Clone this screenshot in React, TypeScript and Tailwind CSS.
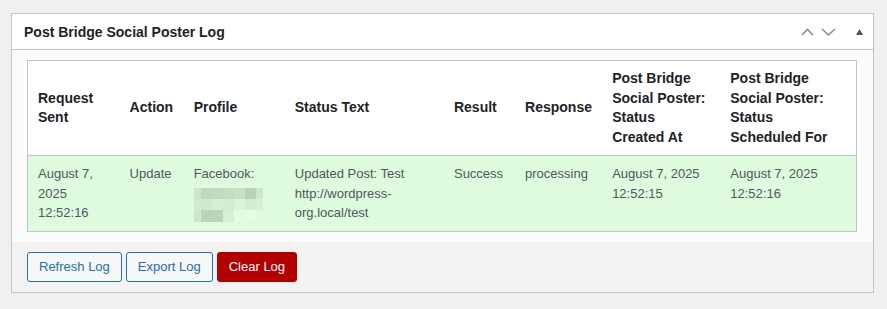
import React from 'react';

const columns = [
  { label: 'Request Sent', width: 'w-[92px]' },
  { label: 'Action', width: 'w-[64px]' },
  { label: 'Profile', width: 'w-[101px]' },
  { label: 'Status Text', width: 'w-[159px]' },
  { label: 'Result', width: 'w-[71px]' },
  { label: 'Response', width: 'w-[87px]' },
  { label: 'Post Bridge Social Poster: Status Created At', width: 'w-[118px]' },
  { label: 'Post Bridge Social Poster: Status Scheduled For', width: 'w-[136px]' },
];

// pixelated (redacted) profile name
const blurCols = ['w-[7px]', 'w-[11px]', 'w-[11px]', 'w-[11px]', 'w-[11px]', 'w-[11px]', 'w-[7px]'];
const blurRows = [
  { h: 'h-[11px]', colors: ['#c9e6c9', '#bcd9bc', '#bfdcbf', '#c3dfc3', '#c6e2c6', '#b7d3b7', '#cbe7cb'] },
  { h: 'h-[11px]', colors: ['#d1ebd1', '#cfe8cf', '#d5eed5', '#d2ecd2', '#d9f2d9', '#d3ecd3', '#d6efd6'] },
  { h: 'h-[12px]', colors: ['#cbe7cb', '#b9d5b9', '#bad6ba', '#d5f0d5', '#e3fae3', '#e4fbe4', '#e0f7e0'] },
];

function BlurredName() {
  return (
    <div className="mt-[4px] flex flex-col">
      {blurRows.map((row, r) => (
        <div key={r} className={`flex ${row.h}`}>
          {blurCols.map((w, c) => (
            <div key={c} className={`${w} h-full`} style={{ backgroundColor: row.colors[c] }} />
          ))}
        </div>
      ))}
    </div>
  );
}

export default function App() {
  return (
    <div className="min-h-[309px] bg-[#f0f0f1] pt-[13px] pl-[11px] pr-[13px] pb-[16px] font-['Liberation_Sans',Arial,sans-serif]">
      <div className="w-[863px] border border-[#c3c4c7] bg-white">
        {/* Header */}
        <div className="flex h-[36px] items-center justify-between border-b border-[#c3c4c7] pl-[12px] pr-[10px]">
          <h2 className="pt-[1px] text-[14px] font-semibold text-[#1d2327]">Post Bridge Social Poster Log</h2>
          <div className="flex items-center">
            <svg width="13" height="8" viewBox="0 0 13 8" className="mr-[7px]">
              <path d="M1 7 L6.5 1.5 L12 7" fill="none" stroke="#8c8f94" strokeWidth="1.6" />
            </svg>
            <svg width="15" height="8" viewBox="0 0 15 8" className="mr-[20px]">
              <path d="M1 1 L7.5 7 L14 1" fill="none" stroke="#8c8f94" strokeWidth="1.6" />
            </svg>
            <svg width="7" height="6" viewBox="0 0 7 6">
              <path d="M0 6 L3.5 0 L7 6 Z" fill="#50575e" />
            </svg>
          </div>
        </div>

        {/* Log table */}
        <div className="bg-[#fcfcfc] pt-[10px] pb-[10px] pl-[15px] pr-[16px]">
          <table className="w-[830px] table-fixed border-collapse border border-[#c3c4c7] bg-white">
            <thead>
              <tr className="border-b border-[#c3c4c7]">
                {columns.map((col) => (
                  <th
                    key={col.label}
                    className={`${col.width} px-[10px] py-[8px] text-left align-middle text-[14px] font-semibold leading-[19.6px] text-[#1d2327]`}
                  >
                    {col.label}
                  </th>
                ))}
              </tr>
            </thead>
            <tbody>
              <tr className="bg-[#ddfcdd] align-top text-[13px] leading-[19.5px] text-[#50575e]">
                <td className="px-[10px] pt-[8px] pb-[8px]">August 7, 2025 12:52:16</td>
                <td className="px-[10px] pt-[8px] pb-[8px]">Update</td>
                <td className="px-[10px] pt-[8px] pb-[8px]">
                  Facebook:
                  <BlurredName />
                </td>
                <td className="px-[10px] pt-[8px] pb-[8px]">Updated Post: Test http://wordpress-org.local/test</td>
                <td className="px-[10px] pt-[8px] pb-[8px]">Success</td>
                <td className="px-[10px] pt-[8px] pb-[8px]">processing</td>
                <td className="px-[10px] pt-[8px] pb-[8px]">August 7, 2025 12:52:15</td>
                <td className="px-[10px] pt-[8px] pb-[8px]">August 7, 2025 12:52:16</td>
              </tr>
            </tbody>
          </table>
        </div>

        {/* Actions */}
        <div className="flex gap-[4px] bg-[#f3f3f3] pt-[10px] pb-[10px] pl-[15px]">
          <button className="h-[30px] rounded-[3px] border border-[#2271b1] bg-[#f6f7f7] px-[11px] text-[13px] text-[#2271b1]">
            Refresh Log
          </button>
          <button className="h-[30px] rounded-[3px] border border-[#2271b1] bg-[#f6f7f7] px-[11px] text-[13px] text-[#2271b1]">
            Export Log
          </button>
          <button className="h-[30px] rounded-[3px] border border-[#b30000] bg-[#b30000] px-[11px] text-[13px] text-white">
            Clear Log
          </button>
        </div>
      </div>
    </div>
  );
}
